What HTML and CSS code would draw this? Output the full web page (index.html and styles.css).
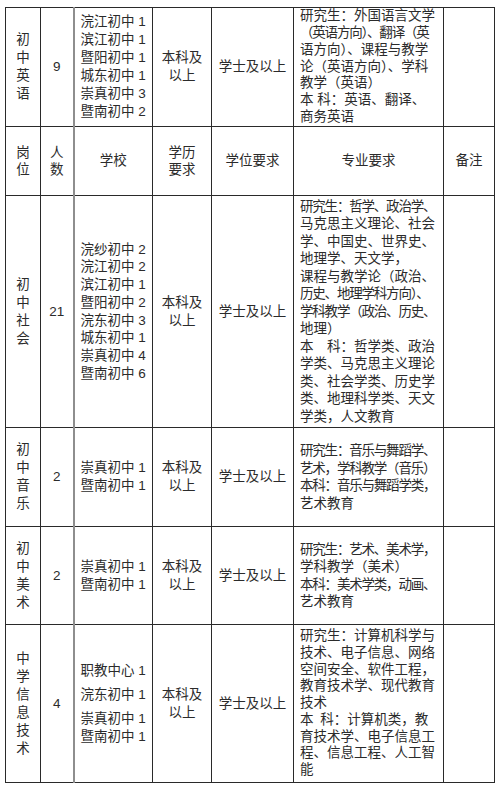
FILE: index.html
```html
<!DOCTYPE html>
<html lang="zh-CN">
<head>
<meta charset="utf-8">
<title>岗位表</title>
<link rel="stylesheet" href="styles.css">
</head>
<body>
<table class="sheet">
  <colgroup>
    <col class="c-pos"><col class="c-num"><col class="c-school"><col class="c-edu"><col class="c-deg"><col class="c-major"><col class="c-note">
  </colgroup>
  <tr class="r-eng">
    <td class="pos">初<br>中<br>英<br>语</td>
    <td>9</td>
    <td class="school">浣江初中 1<br>滨江初中 1<br>暨阳初中 1<br>城东初中 1<br>崇真初中 3<br>暨南初中 2</td>
    <td class="edu">本科及<br>以上</td>
    <td>学士及以上</td>
    <td class="major dense">
      <span class="ln">研究生：外国语言文学</span>
      <span class="ln t">（英语方向）、翻译（英</span>
      <span class="ln">语方向）、课程与教学</span>
      <span class="ln">论（英语方向）、学科</span>
      <span class="ln">教学（英语）</span>
      <span class="ln">本 科：英语、翻译、</span>
      <span class="ln">商务英语</span>
    </td>
    <td></td>
  </tr>
  <tr class="r-head">
    <td class="head2">岗<br>位</td>
    <td class="head2">人<br>数</td>
    <td class="school">学校</td>
    <td class="head2">学历<br>要求</td>
    <td>学位要求</td>
    <td>专业要求</td>
    <td>备注</td>
  </tr>
  <tr class="r-soc">
    <td class="pos">初<br>中<br>社<br>会</td>
    <td>21</td>
    <td class="school loose">浣纱初中 2<br>浣江初中 2<br>滨江初中 1<br>暨阳初中 2<br>浣东初中 3<br>城东初中 1<br>崇真初中 4<br>暨南初中 6</td>
    <td class="edu">本科及<br>以上</td>
    <td>学士及以上</td>
    <td class="major">
      <span class="ln t">研究生：哲学、政治学、</span>
      <span class="ln">马克思主义理论、社会</span>
      <span class="ln">学、中国史、世界史、</span>
      <span class="ln">地理学、天文学，</span>
      <span class="ln">课程与教学论（政治、</span>
      <span class="ln t">历史、地理学科方向）、</span>
      <span class="ln t">学科教学（政治、历史、</span>
      <span class="ln">地理）</span>
      <span class="ln">本　科：哲学类、政治</span>
      <span class="ln">学类、马克思主义理论</span>
      <span class="ln">类、社会学类、历史学</span>
      <span class="ln">类、地理科学类、天文</span>
      <span class="ln">学类，人文教育</span>
    </td>
    <td></td>
  </tr>
  <tr class="r-mus">
    <td class="pos">初<br>中<br>音<br>乐</td>
    <td>2</td>
    <td class="school">崇真初中 1<br>暨南初中 1</td>
    <td class="edu">本科及<br>以上</td>
    <td>学士及以上</td>
    <td class="major">
      <span class="ln t">研究生：音乐与舞蹈学、</span>
      <span class="ln t">艺术，学科教学（音乐）</span>
      <span class="ln t">本科：音乐与舞蹈学类，</span>
      <span class="ln">艺术教育</span>
    </td>
    <td></td>
  </tr>
  <tr class="r-art">
    <td class="pos">初<br>中<br>美<br>术</td>
    <td>2</td>
    <td class="school">崇真初中 1<br>暨南初中 1</td>
    <td class="edu">本科及<br>以上</td>
    <td>学士及以上</td>
    <td class="major">
      <span class="ln t">研究生：艺术、美术学，</span>
      <span class="ln">学科教学（美术）</span>
      <span class="ln t">本科：美术学类，动画、</span>
      <span class="ln">艺术教育</span>
    </td>
    <td></td>
  </tr>
  <tr class="r-it">
    <td class="pos">中<br>学<br>信<br>息<br>技<br>术</td>
    <td>4</td>
    <td class="school">
      <div class="grp">职教中心 1</div>
      <div class="grp">浣东初中 1</div>
      <div class="grp">崇真初中 1<br>暨南初中 1</div>
    </td>
    <td class="edu">本科及<br>以上</td>
    <td>学士及以上</td>
    <td class="major dense">
      <span class="ln">研究生：计算机科学与</span>
      <span class="ln">技术、电子信息、网络</span>
      <span class="ln">空间安全、软件工程，</span>
      <span class="ln">教育技术学、现代教育</span>
      <span class="ln">技术</span>
      <span class="ln">本&ensp;科：计算机类，教</span>
      <span class="ln">育技术学、电子信息工</span>
      <span class="ln">程、信息工程、人工智</span>
      <span class="ln">能</span>
    </td>
    <td></td>
  </tr>
</table>
</body>
</html>
```

FILE: styles.css
```css
html, body {
  margin: 0;
  padding: 0;
  background: #ffffff;
}

body {
  font-family: "Liberation Sans", "Noto Sans CJK SC", sans-serif;
  font-size: 13.5px;
  color: #2b2b2b;
}

.sheet {
  border-collapse: collapse;
  table-layout: fixed;
  width: 489px;
  margin: 7px 0 0 5px;
}

.c-pos { width: 35px; }
.c-num { width: 33px; }
.c-school { width: 79px; }
.c-edu { width: 59px; }
.c-deg { width: 82px; }
.c-major { width: 150px; }
.c-note { width: 51px; }

.sheet td {
  border: 1px solid #2a2a2a;
  padding: 0;
  text-align: center;
  vertical-align: middle;
  line-height: 17.5px;
  overflow: hidden;
}

.sheet td.school {
  border-left: 2px solid #8e8e8e;
  line-height: 18px;
}

.sheet td.school.loose {
  line-height: 17.7px;
}

.sheet td.pos {
  line-height: 18px;
}

.sheet td.edu {
  line-height: 18px;
}

.sheet td.head2 {
  line-height: 17px;
}

.grp {
  margin: 6px 0;
}

.sheet td.major {
  text-align: left;
  padding-left: 6px;
}

.sheet td.major.dense {
  line-height: 16.8px;
}

.ln {
  display: block;
  white-space: nowrap;
}

.ln.t {
  letter-spacing: -1.2px;
}

.r-eng { height: 119px; }
.r-head { height: 69px; }
.r-soc { height: 232px; }
.r-mus { height: 99px; }
.r-art { height: 98px; }
.r-it { height: 158px; }
```
